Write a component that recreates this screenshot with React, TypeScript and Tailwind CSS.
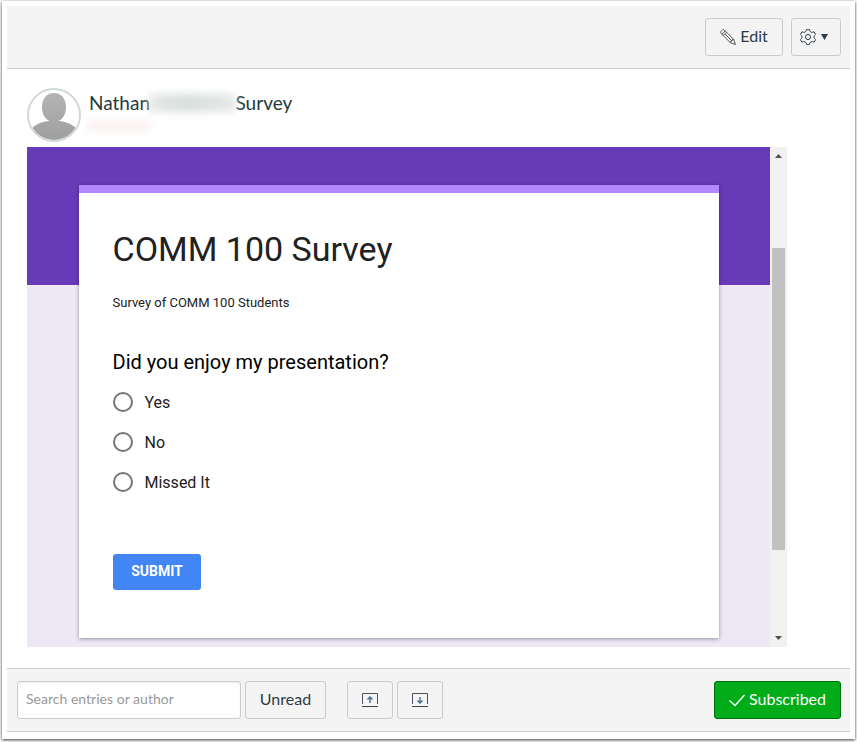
import type { ReactNode } from 'react'

const options = ['Yes', 'No', 'Missed It'] as const

function ToolbarButton({ className, label, children }: { className: string; label?: string; children: ReactNode }) {
  return (
    <button
      aria-label={label}
      className={`flex h-[38px] shrink-0 items-center justify-center rounded-[3px] border border-[#c7cdd1] bg-[#f4f4f4] text-base text-[#2d3b45] ${className}`}
      type="button"
    >
      {children}
    </button>
  )
}

function PencilIcon() {
  return (
    <svg className="mr-1 h-4 w-4" fill="none" stroke="#4a5049" strokeWidth="0.95" viewBox="0 0 16 16">
      <path d="M.6 2.8 2.8.6Q3.4.2 4 .7L13.7 10.4 15.5 15.5 10.4 13.7.7 4Q.2 3.4.6 2.8Z" />
      <path d="M1.900 5.200 5.200 1.900M3.200 6.500 6.500 3.200M4.900 4.900 12 12M10.400 13.700l.5-1.700 1.100 0 0-1.100 1.700-.5" />
    </svg>
  )
}

function GearIcon() {
  return (
    <svg className="h-4 w-4" fill="none" stroke="#394651" strokeLinejoin="round" viewBox="0 0 16 16">
      <path d="M6.500.6h3l.4 1.600q.9 1.500 2.700 1.100l1.500-.5 1.500 2.600-1.200 1.200q-1 1.400 0 2.800l1.200 1.200-1.500 2.600-1.500-.5q-1.800-.4-2.700 1.100l-.4 1.600h-3l-.4-1.600q-.9-1.500-2.700-1.100l-1.500.5L.4 10.600l1.200-1.200q1-1.400 0-2.800L.4 5.400l1.500-2.600 1.500.5q1.800.4 2.700-1.100z" />
      <circle cx="8" cy="8" r="2.600" />
    </svg>
  )
}

function TrayIcon({ down = false }: { down?: boolean }) {
  return (
    <svg className="h-4 w-4" fill="none" stroke="#394651" viewBox="0 0 16 16">
      <path d="M.5 12V1.500H15.500V12" stroke="#54505f" />
      <path d="M0 14.500H16" />
      <path d={down ? 'M8 5v6M5.500 8.500 8 11l2.500-2.500' : 'M8 11V5M5.500 7.500 8 5l2.500 2.500'} stroke="#43708a" strokeWidth="1.400" />
    </svg>
  )
}

function Avatar() {
  return (
    <svg className="h-[54px] w-[54px] shrink-0" viewBox="0 0 54 54">
      <defs>
        <linearGradient id="person" x1="0" x2="0" y1="0" y2="1">
          <stop offset="0" stopColor="#b4b4b4" />
          <stop offset="1" stopColor="#9e9e9e" />
        </linearGradient>
        <clipPath id="avatar-clip">
          <circle cx="27" cy="27" r="25" />
        </clipPath>
      </defs>
      <circle cx="27" cy="27" fill="#fff" r="26" />
      <path
        clipPath="url(#avatar-clip)"
        d="M27 5C19.500 5 15 11 15 19c0 6.500 2.500 11.500 7.500 14C15 33.500 9 36 4 41v13h46V41c-5-5-11-7.500-18.500-8 5-2.500 7.500-7.500 7.500-14C39 11 34.500 5 27 5Z"
        fill="url(#person)"
      />
      <circle cx="27" cy="27" fill="none" r="26" stroke="#d1d9d7" strokeWidth="2" />
    </svg>
  )
}

function SurveyFrame() {
  return (
    <div className="flex h-[500px] w-[760px]">
      <div className="w-[743px] bg-[linear-gradient(#673ab7_138px,#ede7f6_138px)] pl-[52px] pt-[38px]">
        <form className="h-[453px] w-[640px] border-t-8 border-[#b388ff] bg-white pl-[33.5px] pt-[35px] font-[Roboto,sans-serif] shadow-[0_1px_4px_rgba(0,0,0,0.37)]">
          <h1 className="text-[34px] leading-[42px] text-[#212121]">COMM 100 Survey</h1>
          <p className="mt-6 text-[13px] leading-[17px] text-[#212121]">Survey of COMM 100 Students</p>
          <h2 className="mt-[38px] text-xl leading-[26px] text-black">Did you enjoy my presentation?</h2>
          <div className="mt-[7px] pl-[0.5px]">
            {options.map((option) => (
              <div className="flex h-10 items-center" key={option}>
                <span className="h-5 w-5 rounded-full border-2 border-[#757575]" />
                <span className="ml-[11.5px] pt-0.5 text-base text-[#212121]">{option}</span>
              </div>
            ))}
          </div>
          <button className="ml-[0.5px] mt-[52px] h-9 w-[88px] rounded-[3px] bg-[#4285f4] pb-0.5 text-sm font-bold text-white" type="button">
            SUBMIT
          </button>
        </form>
      </div>
      <div className="flex w-[17px] flex-col items-center bg-[#f1f1f1]">
        <svg className="h-[17px] w-[17px]" viewBox="0 0 17 17">
          <path d="M5 11 8.500 7 12 11Z" fill="#505050" />
        </svg>
        <div className="mt-[84px] h-[302px] w-[13px] bg-[#c1c1c1]" />
        <svg className="mb-px mt-auto h-[17px] w-[17px]" viewBox="0 0 17 17">
          <path d="M5 7h7L8.500 11Z" fill="#505050" />
        </svg>
      </div>
    </div>
  )
}

export default function App() {
  return (
    <div className="h-[742px] w-[857px] overflow-hidden bg-white px-0.5 pt-px font-[Lato,sans-serif]">
      <div className="flex h-[738px] w-[853px] flex-col bg-white px-[5px] pt-[5px] shadow-[0_1px_3px_rgba(0,0,0,0.8)]">
        <header className="flex h-[63px] items-center justify-end gap-2 border-b border-[#c7cdd1] bg-[#f4f4f4] pr-[9px]">
          <ToolbarButton className="w-[78px]">
            <PencilIcon />
            <span className="pb-0.5">Edit</span>
          </ToolbarButton>
          <ToolbarButton className="w-[50px] pr-[5px]" label="Settings">
            <GearIcon />
            <svg className="-mr-px ml-[5px] h-[6px] w-[7px]" viewBox="0 0 7 6">
              <path d="M0 0h7L3.500 6Z" fill="#2d3b45" />
            </svg>
          </ToolbarButton>
        </header>

        <main className="h-[599px] px-5 pt-[19px]">
          <div className="flex h-[59px]">
            <Avatar />
            <div className="ml-2">
              <div className="mt-[3px] flex h-6 items-center text-[19px] text-[#1f3b3a]">
                <span className="w-[60px]">Nathan</span>
                <span className="z-10 h-[18px] w-[86.5px] bg-[linear-gradient(90deg,#e4e9e6,#d6dedb_45%,#e6e9e8)] blur-[4px]" />
                <span>Survey</span>
              </div>
              <div className="ml-[-2px] mt-[7px] h-2 w-[64px] bg-[#f8eeec] blur-[4px]" />
            </div>
          </div>
          <SurveyFrame />
        </main>

        <footer className="flex h-16 items-center border-y border-[#c7cdd1] bg-[#f4f4f4] pl-[10px] pr-[9px]">
          <input
            className="h-[38px] w-[224px] rounded-[3px] border border-[#c7cdd1] bg-white px-2 pb-[3px] text-sm tracking-[0.02px] shadow-[inset_0_1px_2px_rgba(0,0,0,0.08)] placeholder:text-[#999]"
            placeholder="Search entries or author"
            type="text"
          />
          <ToolbarButton className="ml-1 w-[81px] pb-0.5">Unread</ToolbarButton>
          <ToolbarButton className="ml-[21px] w-[46px]" label="Collapse replies">
            <TrayIcon />
          </ToolbarButton>
          <ToolbarButton className="ml-1 w-[46px]" label="Expand replies">
            <TrayIcon down />
          </ToolbarButton>
          <button
            className="ml-auto flex h-[38px] w-[127px] items-center justify-center rounded-[3px] border border-[#006b0c] bg-[#00ac18] text-base text-white"
            type="button"
          >
            <svg className="mr-1 h-4 w-4" fill="none" stroke="currentColor" strokeWidth="1.300" viewBox="0 0 16 16">
              <path d="M.5 8.500 6 13.500 15.500 3" />
            </svg>
            <span className="pb-0.5">Subscribed</span>
          </button>
        </footer>
      </div>
    </div>
  )
}
